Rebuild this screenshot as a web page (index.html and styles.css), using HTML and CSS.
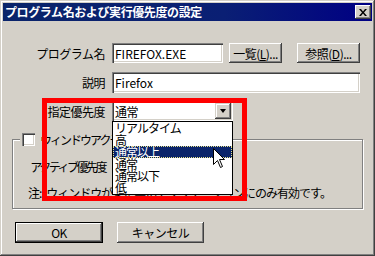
FILE: index.html
```html
<!DOCTYPE html>
<html lang="ja">
<head>
    <meta charset="UTF-8">
    <title>プログラム名および実行優先度の設定</title>
    <link rel="stylesheet" href="styles.css">
</head>
<body>
    <div class="ventana">
        <div class="barra-titulo">
            <span class="titulo">プログラム名および実行優先度の設定</span>
            <button class="cerrar">
                <svg width="8" height="7" viewBox="0 0 8 7">
                    <path d="M0 0h2l2 2.4 2-2.4h2l-3 3.5 3 3.5h-2l-2-2.4-2 2.4h-2l3-3.5z" fill="#000"/>
                </svg>
            </button>
        </div>

        <div class="contenido">
            <div class="fila fila-programa">
                <label class="etiqueta">プログラム名</label>
                <div class="campo campo-programa">FIREFOX.EXE</div>
                <button class="boton boton-lista">一覧(<u>L</u>)...</button>
                <button class="boton boton-ref">参照(<u>D</u>)...</button>
            </div>

            <div class="fila fila-desc">
                <label class="etiqueta">説明</label>
                <div class="campo campo-desc">Firefox</div>
            </div>

            <div class="fila fila-prio">
                <label class="etiqueta">指定優先度</label>
                <div class="combo">
                    <span class="combo-texto">通常</span>
                    <span class="combo-boton"><span class="flecha"></span></span>
                </div>
            </div>

            <div class="grupo">
                <div class="grupo-titulo">
                    <span class="casilla"></span>
                    <span>ウィンドウアクティブ時の優先度</span>
                </div>
                <div class="fila fila-activa">
                    <label class="etiqueta etiqueta-grupo">アクティブ優先度</label>
                    <!-- este combo queda tapado por la lista abierta -->
                    <div class="combo">
                        <span class="combo-texto"></span>
                        <span class="combo-boton"><span class="flecha"></span></span>
                    </div>
                </div>
                <p class="nota"><span class="nota-marca">注:</span>ウィンドウがまだ無いアプリケーションにのみ有効です。</p>
            </div>

            <div class="acciones">
                <button class="boton boton-ok">OK</button>
                <button class="boton boton-cancelar">キャンセル</button>
            </div>
        </div>

        <!-- lista desplegable abierta del combo -->
        <ul class="lista">
            <li>リアルタイム</li>
            <li>高</li>
            <li class="activo">通常以上</li>
            <li>通常</li>
            <li>通常以下</li>
            <li>低</li>
        </ul>

        <div class="marco-rojo"></div>

        <svg class="cursor" width="13" height="21" viewBox="0 0 13 21">
            <path d="M0.5 0.5V16.5L4.5 12.5L7.5 19.5L9.5 18.5L6.5 11.5H11.5Z" fill="#fff" stroke="#000" stroke-linejoin="miter"/>
        </svg>
    </div>
</body>
</html>
```

FILE: styles.css
```css
* {
    box-sizing: border-box;
}

body {
    margin: 0;
    font-family: "Noto Sans CJK JP", sans-serif;
    font-size: 12px;
    color: #000;
}

.ventana {
    position: relative;
    width: 375px;
    height: 256px;
    padding: 3px;
    background: #d4d0c8;
    box-shadow: inset -1px -1px #404040, inset 1px 1px #d4d0c8,
                inset -2px -2px #808080, inset 2px 2px #fff;
}

.barra-titulo {
    display: flex;
    align-items: center;
    height: 18px;
    padding: 0 1px 0 2px;
    background: linear-gradient(to right, #0a246a, #0a1f74 60%, #000084);
    color: #fff;
}

.titulo {
    flex: 1;
    font-weight: bold;
    letter-spacing: -0.4px;
    line-height: 18px;
    white-space: nowrap;
}

.cerrar {
    width: 16px;
    height: 14px;
    padding: 0;
    border: none;
    background: #d4d0c8;
    display: flex;
    align-items: center;
    justify-content: center;
    box-shadow: inset -1px -1px #404040, inset 1px 1px #fff,
                inset -2px -2px #808080;
}

.contenido {
    display: flex;
    flex-direction: column;
    padding-top: 22px;
}

.fila {
    display: flex;
    align-items: center;
}

.etiqueta {
    width: 109px;
    padding-right: 7px;
    text-align: right;
    letter-spacing: -0.5px;
    white-space: nowrap;
}

.etiqueta-grupo {
    width: 99px;
    letter-spacing: -2.5px;
}

.campo {
    display: flex;
    align-items: center;
    height: 100%;
    padding-left: 3px;
    background: #fff;
    box-shadow: inset 1px 1px #808080, inset 2px 2px #404040,
                inset -1px -1px #fff, inset -2px -2px #d4d0c8;
}

.fila-programa {
    height: 20px;
}

.campo-programa {
    width: 111px;
}

.boton {
    height: 100%;
    padding: 0;
    border: none;
    background: #d4d0c8;
    font: inherit;
    letter-spacing: -0.5px;
    color: #000;
    box-shadow: inset -1px -1px #404040, inset 1px 1px #fff,
                inset -2px -2px #808080, inset 2px 2px #d4d0c8;
}

.boton-lista {
    width: 53px;
    margin-left: 6px;
}

.boton-ref {
    width: 63px;
    margin-left: 15px;
}

.fila-desc {
    height: 21px;
    margin-top: 9px;
}

.campo-desc {
    width: 248px;
}

.fila-prio {
    height: 20px;
    margin-top: 8px;
}

.combo {
    display: flex;
    align-items: center;
    width: 121px;
    height: 100%;
    padding: 2px;
    background: #fff;
    box-shadow: inset 1px 1px #808080, inset 2px 2px #404040,
                inset -1px -1px #fff, inset -2px -2px #d4d0c8;
}

.combo-texto {
    flex: 1;
    padding-left: 1px;
    letter-spacing: -0.5px;
}

.combo-boton {
    display: flex;
    align-items: center;
    justify-content: center;
    width: 16px;
    height: 16px;
    background: #d4d0c8;
    box-shadow: inset -1px -1px #404040, inset 1px 1px #d4d0c8,
                inset -2px -2px #808080, inset 2px 2px #fff;
}

.flecha {
    width: 0;
    height: 0;
    border-top: 4px solid #000;
    border-left: 3.5px solid transparent;
    border-right: 3.5px solid transparent;
}

.grupo {
    position: relative;
    margin: 18px 9px 0 9px;
    padding-bottom: 7px;
    border: 1px solid #808080;
    box-shadow: inset 1px 1px #fff, 1px 1px #fff;
}

.grupo-titulo {
    position: absolute;
    top: -7px;
    left: 7px;
    display: flex;
    align-items: center;
    gap: 5px;
    padding: 0 2px;
    background: #d4d0c8;
    line-height: 13px;
    letter-spacing: -2px;
    white-space: nowrap;
}

.casilla {
    width: 13px;
    height: 13px;
    background: #fff;
    box-shadow: inset 1px 1px #808080, inset 2px 2px #404040,
                inset -1px -1px #fff, inset -2px -2px #d4d0c8;
}

.fila-activa {
    height: 21px;
    margin-top: 16px;
}

.nota {
    margin: 8px 0 0 15px;
    line-height: 16px;
    letter-spacing: -1px;
    white-space: nowrap;
}

.nota-marca {
    margin-right: 5px;
}

.acciones {
    display: flex;
    gap: 14px;
    height: 21px;
    margin-top: 13px;
    padding-left: 12px;
}

.boton-ok {
    width: 88px;
    box-shadow: inset 0 0 0 1px #000, inset -2px -2px #404040,
                inset 2px 2px #fff, inset -3px -3px #808080;
}

.boton-cancelar {
    width: 87px;
}

.lista {
    position: absolute;
    left: 112px;
    top: 121px;
    width: 121px;
    margin: 0;
    padding: 0;
    list-style: none;
    background: #fff;
    border: 1px solid #000;
}

.lista li {
    height: 12px;
    padding-left: 2px;
    line-height: 12px;
    letter-spacing: -1px;
    white-space: nowrap;
}

.lista li.activo {
    background: #0a246a;
    color: #fff;
    outline: 1px dotted #e6e28a;
    outline-offset: -1px;
}

.marco-rojo {
    position: absolute;
    left: 42px;
    top: 98px;
    width: 205px;
    height: 103px;
    border: 5px solid #ff0000;
}

.cursor {
    position: absolute;
    left: 213px;
    top: 148px;
}
```
